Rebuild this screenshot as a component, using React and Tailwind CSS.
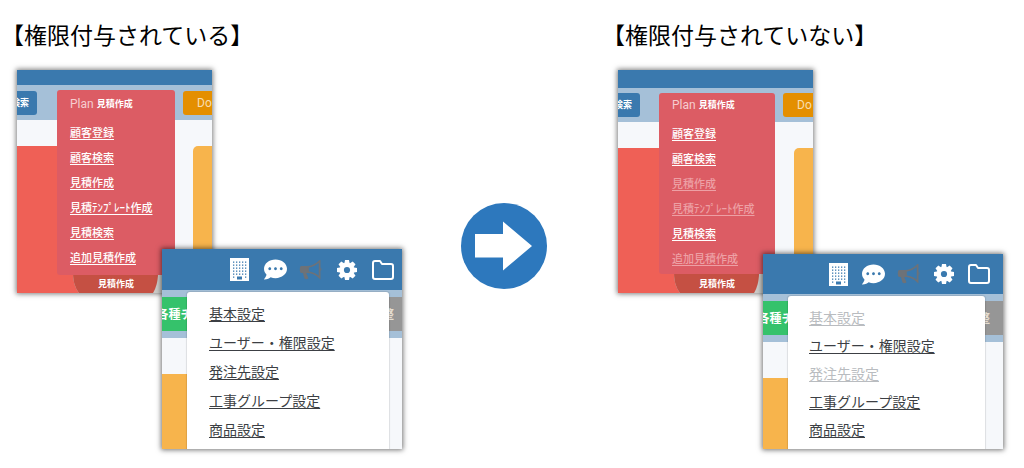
import React from 'react';
import clsx from 'clsx';
import { FaCommentDots } from 'react-icons/fa';
import { FiFolder } from 'react-icons/fi';

const planMenu = [
  { label: '顧客登録' },
  { label: '顧客検索' },
  { label: '見積作成', restricted: true },
  { label: '見積ﾃﾝﾌﾟﾚｰﾄ作成', restricted: true },
  { label: '見積検索' },
  { label: '追加見積作成', restricted: true },
];

const settingsMenu = [
  { label: '基本設定', restricted: true },
  { label: 'ユーザー・権限設定' },
  { label: '発注先設定', restricted: true },
  { label: '工事グループ設定' },
  { label: '商品設定' },
];

const BuildingIcon = () => (
  <svg width="19" height="23" viewBox="0 0 19 23" aria-hidden="true">
    <path d="M0 0h19v23H0z" fill="#fff" />
    {[3.5, 6.5, 9.5, 12.5, 15.5].map((y) =>
      [3, 6, 9, 12, 15].map((x) => (
        <rect key={`${x}-${y}`} x={x} y={y} width="1.3" height="1.3" fill="#3a79ae" />
      ))
    )}
    <path d="M3 18.5h1.3v1.3H3zM15 18.5h1.3v1.3H15zM7 18.500h5v3H7z" fill="#3a79ae" />
  </svg>
);

const BullhornIcon = () => (
  <svg width="24" height="20" viewBox="0 0 24 20" aria-hidden="true">
    <path d="M2.500 6H9v7H7.200l2.300 5.200c-1 1.200-2.800 1.300-4 .4L3.900 13H2.500C1.300 13 .8 12 .8 9.500S1.300 6 2.500 6z" fill="#6d7278" />
    <path d="M9 6.800C13.500 6.300 17.300 4.300 20.600 1v16.500C17.300 14.500 13.500 12.700 9 12.200z" fill="none" stroke="#6d7278" strokeWidth="1.7" />
    <path d="M21.500 7.500c1.300.3 1.300 3.200 0 3.500z" fill="#6d7278" />
  </svg>
);

const GearIcon = () => (
  <svg width="20" height="20" viewBox="0 0 20 20" aria-hidden="true">
    {[0, 45, 90, 135].map((angle) => (
      <path key={angle} d="M8 0h4l.8 4v12l-.8 4H8l-.8-4V4z" fill="#fff" transform={`rotate(${angle} 10 10)`} />
    ))}
    <circle cx="10" cy="10" r="7.3" fill="#fff" />
    <circle cx="10" cy="10" r="3.1" fill="#3a79ae" />
  </svg>
);

const ArrowIcon = () => (
  <svg width="86" height="86" viewBox="0 0 86 86" className="block" role="img" aria-label="変更後">
    <circle cx="43" cy="43" r="43" fill="#2d78bd" />
    <path d="M14 31h28V18.5L71 43 42 67.5v-13H14z" fill="#fff" />
  </svg>
);

// Main navigation with the "Plan" menu opened
const PlanScreen = ({ limited }) => (
  <div className="w-[195px] overflow-hidden bg-[#f6f8fb] shadow-[0_0_5px_1px_rgba(0,0,0,0.5)]">
    <div className={clsx('bg-[#3a79ae]', limited ? 'h-[18px]' : 'h-[15px]')} />
    <div className={clsx('flex items-start bg-[#a5c0d8]', limited ? 'h-[34px] pt-[5px]' : 'h-[35px] pt-[6px]')}>
      <button
        className={clsx(
          'flex h-6 items-center justify-end overflow-hidden rounded-r-[3px] bg-[#3a79ae] pr-2 text-[9px] font-bold whitespace-nowrap text-white',
          limited ? 'w-[22px]' : 'w-5'
        )}
      >
        検索
      </button>
      <div className={clsx('relative h-6', limited ? 'ml-[19px] w-[116px]' : 'ml-5 w-[118px]')}>
        <nav className={clsx('absolute inset-x-0 z-10 rounded-[3px] bg-[#dc5c64] px-[13px]', limited ? 'top-0 pb-[3px]' : '-top-px pb-[5px]')}>
          <button className={clsx('flex items-center text-[9px] font-bold text-white', limited ? 'h-6' : 'h-[27px]')}>
            <span className="mr-[3px] font-[Roboto] text-[12px] font-normal text-[#f6cdd0]">Plan</span>
            見積作成
          </button>
          <ul className={limited ? 'pt-1' : 'pt-[3px]'}>
            {planMenu.map((item) => (
              <li key={item.label} className="h-[25px] text-[11px] leading-[24px] font-medium whitespace-nowrap">
                <a
                  href="#"
                  aria-disabled={limited && item.restricted}
                  className={clsx('underline underline-offset-2', limited && item.restricted ? 'text-[#eda0a5]' : 'text-white')}
                >
                  {item.label}
                </a>
              </li>
            ))}
          </ul>
        </nav>
      </div>
      <button className="ml-2 h-6 flex-1 rounded-l-[3px] bg-[#e48f00] pl-3.5 text-left font-[Roboto] text-[12px] text-[#f8deb0]">
        Do
      </button>
    </div>
    <div className={clsx('flex pt-[26px]', limited ? 'h-[171px]' : 'h-[173px]')}>
      <div className="flex w-[145px] flex-col justify-end bg-[#ef6056]">
        <div className="relative ml-14 h-5 bg-[#cbcbc8]">
          <svg viewBox="0 0 89 20" className="absolute top-0 left-0 h-5 w-[89px]" aria-hidden="true">
            <path d="M0 0C0 8 2 15 6 20H0z" fill="#ef6056" />
            <path d="M0 0h85c0 8-2 15-5 20H6C2 15 0 8 0 0z" fill="#c55043" />
          </svg>
          <p className="relative pl-[25px] text-[9px] leading-[22px] font-bold text-white">見積作成</p>
        </div>
      </div>
      <div className="ml-[31px] flex-1 rounded-tl-[5px] bg-[#f7b44c]" />
    </div>
  </div>
);

// Header icons with the settings menu opened
const SettingsScreen = ({ limited }) => {
  const iconClass = clsx('flex shrink-0 items-center justify-center', limited ? 'w-[35px]' : 'w-9');

  return (
    <div
      className={clsx(
        'relative z-20 ml-[145px] w-[240px] overflow-hidden bg-[#f6f8fb] shadow-[0_0_5px_1px_rgba(0,0,0,0.55)]',
        limited ? '-mt-[39px]' : '-mt-11'
      )}
    >
      <header className={clsx('flex items-center bg-[#3a79ae] text-white', limited ? 'h-10 pl-[58px]' : 'h-[41px] pl-[59px]')}>
        <button className={iconClass} aria-label="会社"><BuildingIcon /></button>
        <button className={iconClass} aria-label="メッセージ"><FaCommentDots size={23} /></button>
        <button className={iconClass} aria-label="お知らせ"><BullhornIcon /></button>
        <button className={iconClass} aria-label="設定"><GearIcon /></button>
        <button className={iconClass} aria-label="フォルダ"><FiFolder size={24} /></button>
        {limited && <button className={iconClass} aria-label="ヘルプ"><FiFolder size={24} /></button>}
      </header>

      <div className="grid">
        <div className="col-start-1 row-start-1 flex flex-col">
          <div className="flex h-12 items-center justify-between bg-[#a5c0d8] text-[12px] font-bold">
            <div className="flex h-[34px] w-[25px] items-center justify-center overflow-hidden bg-[#35c26b] text-white">
              <span className="shrink-0">各種チ</span>
            </div>
            <div className={clsx('flex h-[34px] items-center overflow-hidden bg-[#969696] text-[#e6dfd2]', limited ? 'w-[18px]' : 'w-[13px]')}>
              <span className="-ml-[7px] shrink-0">整</span>
            </div>
          </div>
          <div className="mt-9 w-[25px] flex-1 bg-[#f7b44c]" />
        </div>

        <ul
          className={clsx(
            'z-10 col-start-1 row-start-1 mt-0.5 ml-[25px] rounded-t-[3px] bg-white text-[14px] shadow-[0_0_1px_1px_rgba(0,0,0,0.1)]',
            limited ? 'mr-[18px] pt-[7px] pb-[6px] pl-[21px]' : 'mr-[13px] pt-[7px] pb-[5px] pl-[22px]'
          )}
        >
          {settingsMenu.map((item) => (
            <li key={item.label} className={limited ? 'h-7 leading-7' : 'h-[29px] leading-[29px]'}>
              <a
                href="#"
                aria-disabled={limited && item.restricted}
                className={clsx('underline underline-offset-2', limited && item.restricted ? 'text-[#b9bcc0]' : 'text-[#3c3f44]')}
              >
                {item.label}
              </a>
            </li>
          ))}
        </ul>
      </div>
    </div>
  );
};

const Example = ({ title, limited = false }) => (
  <section className="w-[385px] shrink-0">
    <h2 className="-ml-4 mb-5 text-[23px] leading-8 whitespace-nowrap text-black">{title}</h2>
    <PlanScreen limited={limited} />
    <SettingsScreen limited={limited} />
  </section>
);

const App = () => {
  return (
    <main className="flex items-center justify-between bg-white pt-[18px] pr-[21px] pb-4 pl-[17px] font-['Noto_Sans_CJK_JP',sans-serif]">
      <Example title="【権限付与されている】" />
      <div className="mt-6 shrink-0 pr-3">
        <ArrowIcon />
      </div>
      <Example title="【権限付与されていない】" limited />
    </main>
  );
};

export default App;
